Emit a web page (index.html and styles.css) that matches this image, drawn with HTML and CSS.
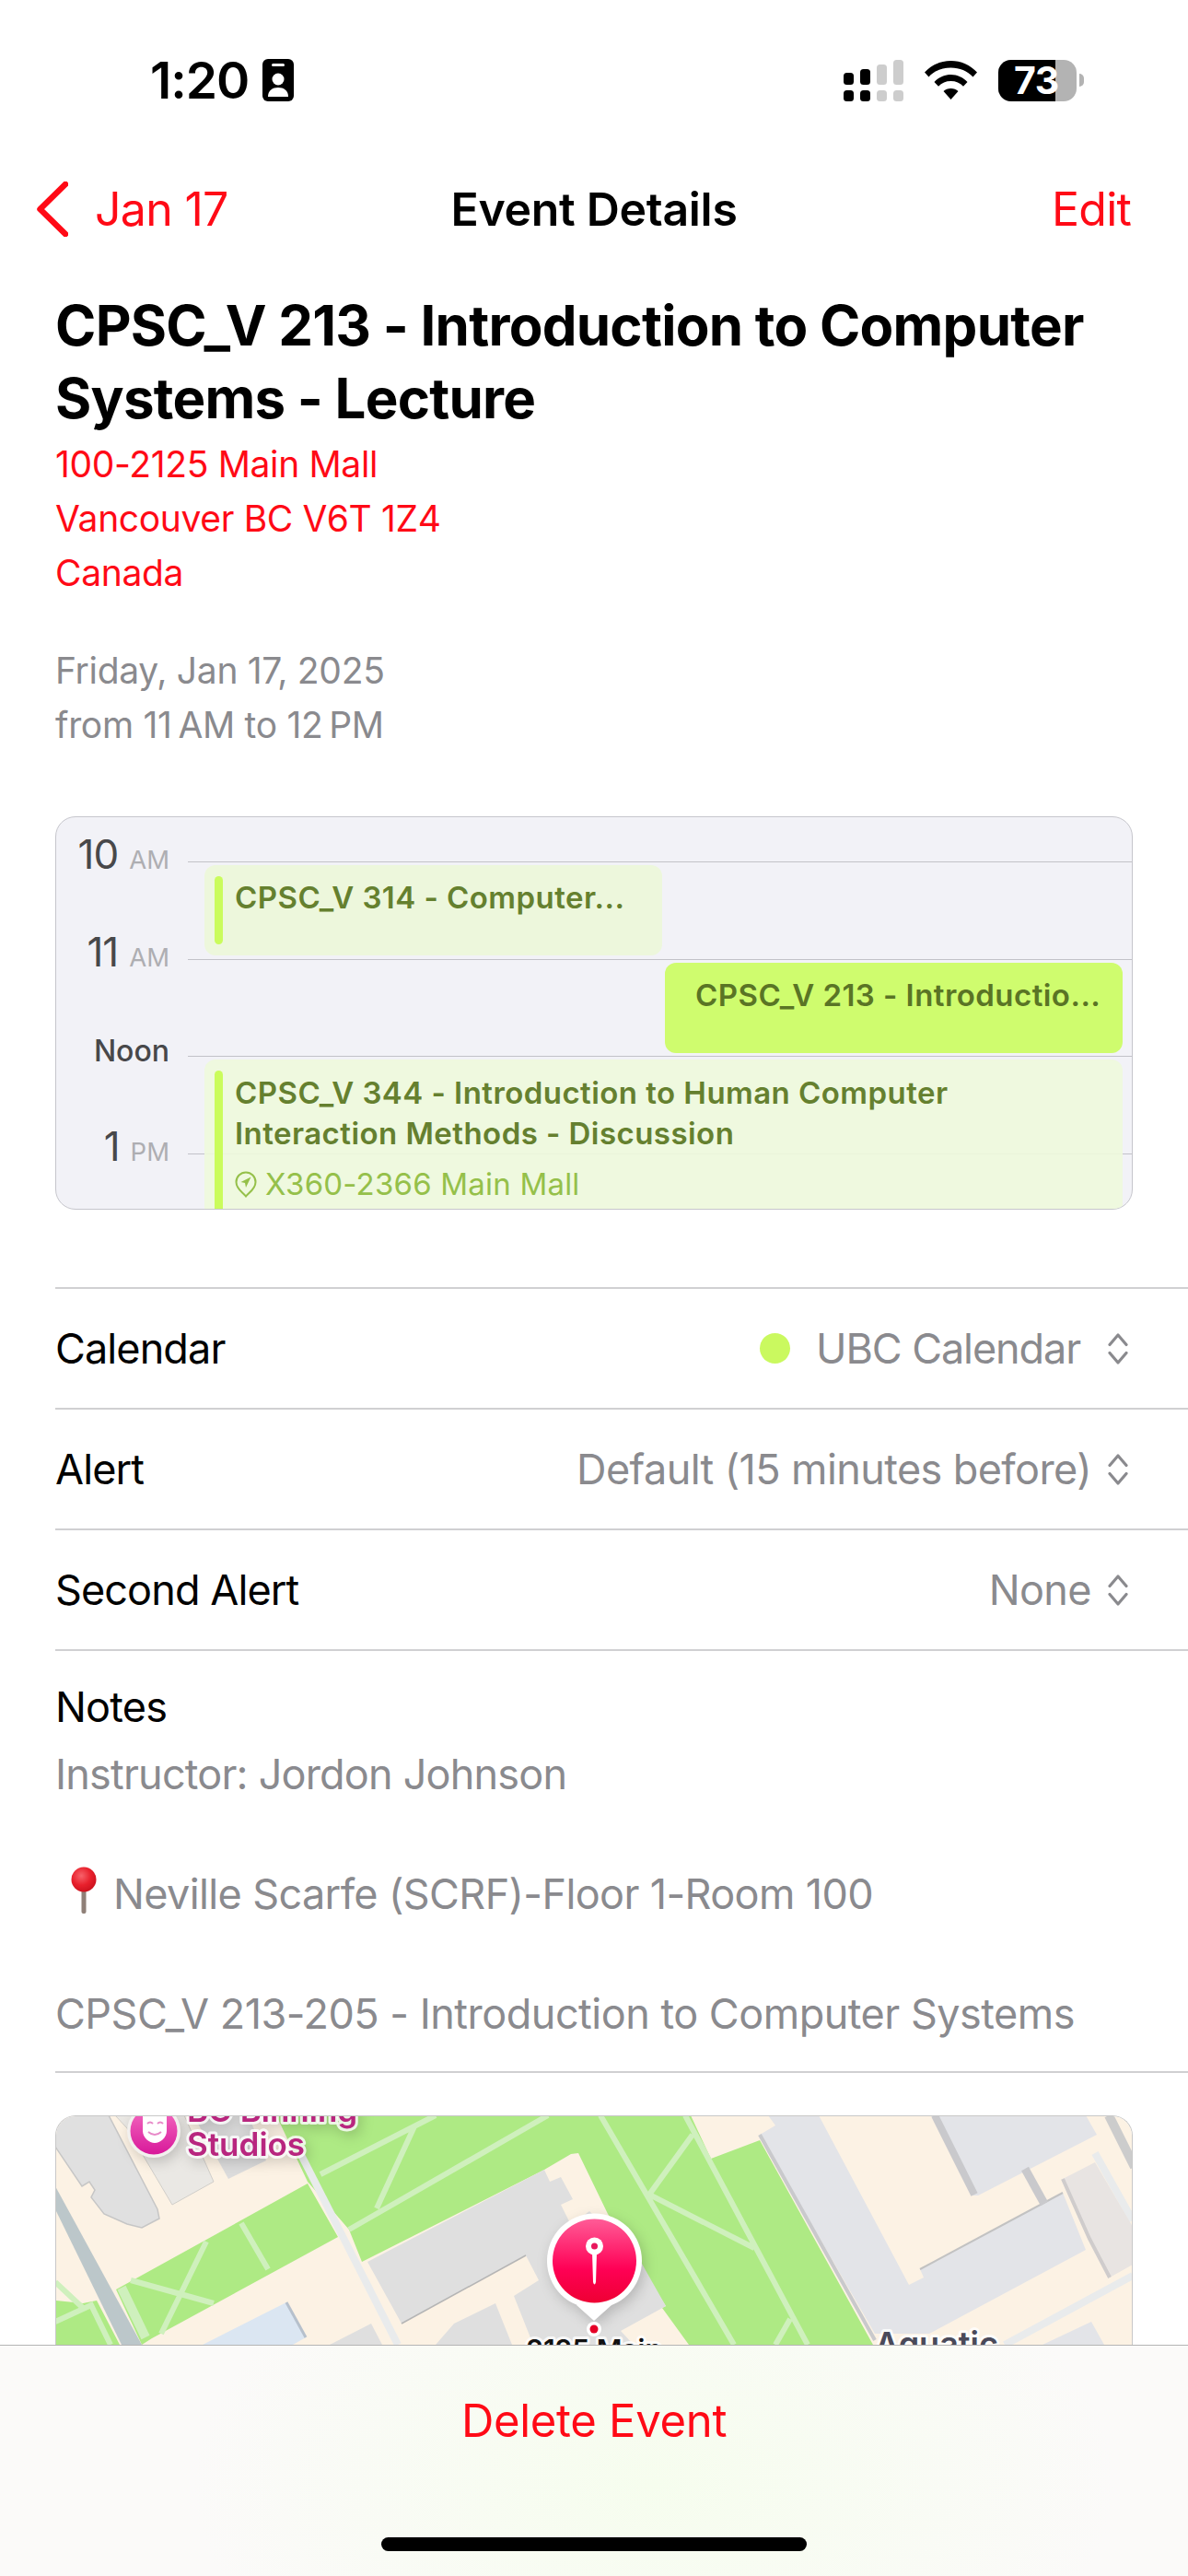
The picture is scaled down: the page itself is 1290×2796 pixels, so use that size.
FILE: index.html
```html
<!DOCTYPE html>
<html lang="en">
<head>
<meta charset="utf-8">
<title>Event Details</title>
<link rel="stylesheet" href="styles.css">
</head>
<body>
<div class="screen">
  <header class="status">
    <div class="status-left">
      <span class="time">1:20</span>
      <svg class="badge" width="34" height="46" viewBox="0 0 34 46"><rect width="34" height="46" rx="6" fill="#000"/><rect x="10" y="5" width="14" height="3" rx="1.5" fill="#fff"/><circle cx="17" cy="22" r="6.5" fill="#fff"/><path d="M6 41c0-7 5-10 11-10s11 3 11 10z" fill="#fff"/></svg>
    </div>
    <div class="status-right">
      <svg class="signal" width="65" height="45" viewBox="0 0 65 45"><g fill="#000"><rect x="0" y="14" width="11" height="13" rx="3.5"/><rect x="18" y="10" width="11" height="17" rx="3.5"/><rect x="0" y="33" width="11" height="12" rx="3.5"/><rect x="18" y="33" width="11" height="12" rx="3.5"/></g><g fill="#cdcdcd"><rect x="36" y="5" width="11" height="22" rx="3.5"/><rect x="54" y="0" width="11" height="27" rx="3.5"/><rect x="36" y="33" width="11" height="12" rx="3.5"/><rect x="54" y="33" width="11" height="12" rx="3.5"/></g></svg>
      <svg class="wifi" width="57" height="42" viewBox="0 0 57 42"><path d="M0 12.500C7.500 4.500 17.500 0 28.500 0S49.500 4.500 57 12.500L52.500 17.500C46.500 11 38 7.500 28.500 7.500S10.500 11 4.500 17.500Z M10.500 23C15 18 21.500 15 28.500 15S42 18 46.500 23L42 27.800C38.500 24 33.800 22 28.500 22S18.500 24 15 27.800Z M20.500 33C22.500 31 25.300 30 28.500 30S34.500 31 36.500 33L28.500 42Z" fill="#000"/></svg>
      <div class="battery"><div class="battery-body"><span class="battery-fill"></span><span class="battery-num">73</span></div><span class="battery-nub"></span></div>
    </div>
  </header>

  <nav class="nav">
    <div class="nav-back">
      <svg width="36" height="60" viewBox="0 0 36 60"><path d="M33 3 5.500 30 33 57" fill="none" stroke="#ff0a16" stroke-width="6.500" stroke-linecap="round" stroke-linejoin="round"/></svg>
      <span>Jan 17</span>
    </div>
    <div class="nav-title">Event Details</div>
    <div class="nav-edit">Edit</div>
  </nav>

  <section class="summary">
    <h1 class="event-title">CPSC_V 213 - Introduction to Computer Systems - Lecture</h1>
    <p class="address">100-2125 Main Mall<br>Vancouver BC V6T 1Z4<br>Canada</p>
    <p class="when">Friday, Jan 17, 2025<br>from 11&#8201;AM to 12&#8201;PM</p>
  </section>

  <section class="day">
    <div class="hour"><div class="hour-label"><b>10</b><i>AM</i></div><div class="hour-line"></div></div>
    <div class="hour"><div class="hour-label"><b>11</b><i>AM</i></div><div class="hour-line"></div></div>
    <div class="hour"><div class="hour-label"><span class="noon">Noon</span></div><div class="hour-line"></div></div>
    <div class="hour"><div class="hour-label"><b>1</b><i>PM</i></div><div class="hour-line"></div></div>
    <div class="event event-a"><span class="event-bar"></span><div class="event-text">CPSC_V 314 - Computer...</div></div>
    <div class="event event-b"><div class="event-text">CPSC_V 213 - Introductio...</div></div>
    <div class="event event-c"><span class="event-bar"></span><div class="event-text">CPSC_V 344 - Introduction to Human Computer<br>Interaction Methods - Discussion<div class="event-loc"><svg width="24" height="29" viewBox="0 0 24 29"><path d="M12 27.500C9 23.500 1.500 20 1.500 12a10.500 10.500 0 0 1 21 0C22.500 20 15 23.500 12 27.500Z" fill="none" stroke="#95c04a" stroke-width="2"/><path d="M17.500 6.500 6.500 12l4.500 1 1 5z" fill="#95c04a"/></svg><span>X360-2366 Main Mall</span></div></div></div>
  </section>

  <section class="rows">
    <div class="row"><span>Calendar</span><div class="row-value"><span class="cal-dot"></span><span class="cal-name">UBC Calendar</span><svg class="updown" width="24" height="34" viewBox="0 0 24 34"><path d="M3 12.500 12 2l9 10.500M3 21.500 12 32l9-10.500" fill="none" stroke="#8a8a8e" stroke-width="3.200" stroke-linecap="round" stroke-linejoin="round"/></svg></div></div>
    <div class="row"><span>Alert</span><div class="row-value"><span>Default (15 minutes before)</span><svg class="updown" width="24" height="34" viewBox="0 0 24 34"><path d="M3 12.500 12 2l9 10.500M3 21.500 12 32l9-10.500" fill="none" stroke="#8a8a8e" stroke-width="3.200" stroke-linecap="round" stroke-linejoin="round"/></svg></div></div>
    <div class="row"><span>Second Alert</span><div class="row-value"><span>None</span><svg class="updown" width="24" height="34" viewBox="0 0 24 34"><path d="M3 12.500 12 2l9 10.500M3 21.500 12 32l9-10.500" fill="none" stroke="#8a8a8e" stroke-width="3.200" stroke-linecap="round" stroke-linejoin="round"/></svg></div></div>
  </section>

  <section class="notes">
    <div class="notes-title">Notes</div>
    <div class="notes-line notes-first">Instructor: Jordon Johnson</div>
    <div class="notes-line notes-gap notes-pin"><svg class="pushpin" width="45" height="52" viewBox="0 0 45 52"><defs><radialGradient id="ball" cx=".4" cy=".35" r=".7"><stop offset="0" stop-color="#f7626a"/><stop offset=".55" stop-color="#e8202c"/><stop offset="1" stop-color="#c9101c"/></radialGradient></defs><rect x="28.500" y="22" width="5" height="29" rx="2" fill="#8f8078"/><circle cx="31" cy="14" r="13.500" fill="url(#ball)"/></svg><span>Neville Scarfe (SCRF)-Floor 1-Room 100</span></div>
    <div class="notes-line notes-gap">CPSC_V 213-205 - Introduction to Computer Systems</div>
  </section>

  <section class="map">
    <svg class="map-svg" width="1170" height="320" viewBox="60 2296 1170 320">
      <defs>
        <linearGradient id="pinfill" x1="0" y1="0" x2="0" y2="1"><stop offset="0" stop-color="#ff5c97"/><stop offset=".6" stop-color="#ff0055"/><stop offset="1" stop-color="#ee0033"/></linearGradient>
        <linearGradient id="maskfill" x1="0" y1="0" x2="0" y2="1"><stop offset="0" stop-color="#f46cc0"/><stop offset="1" stop-color="#d8189a"/></linearGradient>
      </defs>
      <rect x="60" y="2296" width="1170" height="320" fill="#fcf2e4"/>
      <polygon points="300,2296 750,2296 772,2343 825,2323 948,2545 748,2545 719,2505 723,2503 660,2403 628,2337 620,2338 591,2355 393,2455 379,2420 334,2368" fill="#aeea84"/>
      <polygon points="334,2370 126,2485 154,2545 165,2538 367,2428" fill="#aeea84"/>
      <polygon points="60,2497 90,2500 105,2497 130,2545 60,2545" fill="#aeea84"/>
      <polygon points="60,2373 154,2545 132,2545 60,2398" fill="#bcc7ca"/>
      <g fill="none" stroke="#cff0bd" stroke-width="6">
        <path d="M348 2360 473 2296M450 2308 409 2397M379 2420 595 2296M652 2296 797 2545M744 2296 877 2545M752 2317 705 2382 819 2440M858 2517 842 2545"/>
        <path d="M262 2413 291 2463M224 2433 175 2533M142 2475 232 2500M60 2520 99 2502 120 2545M60 2477 90 2505"/>
        <path d="M132 2483 158 2537" stroke-width="10"/>
      </g>
      <path d="M326 2337 432 2545" stroke="#e9ebec" stroke-width="8" fill="none"/>
      <path d="M1230 2470 1091 2545M1189 2337 1230 2410" stroke="#e9ebec" stroke-width="8" fill="none"/>
      <polygon points="60,2296 118,2296 171,2398 173,2408 154,2418 138,2414 113,2403 99,2385 103,2377 97,2368 89,2373 60,2330" fill="#e0e0e0" stroke="#c6c6c6" stroke-width="1.500"/>
      <polygon points="125,2296 200,2296 232,2368 187,2393 138,2310" fill="#eae8e4" stroke="#d0cec9" stroke-width="1"/>
      <polygon points="210,2296 270,2296 289,2345 248,2365" fill="#dcdcdc"/>
      <polygon points="399,2455 591,2355 597,2368 609,2363 622,2387 609,2393 620,2415 640,2400 697,2457 723,2503 674,2530 688,2545 579,2545 558,2492 585,2475 571,2448 436,2522" fill="#dfdfdf"/>
      <path d="M436 2522 571 2448" stroke="#b5b5b5" stroke-width="1.500" fill="none"/>
      <polygon points="473,2545 493,2522 538,2500 556,2545" fill="#dfdfdf"/>
      <polygon points="358,2545 403,2522 415,2545" fill="#dfdfdf"/>
      <polygon points="220,2545 311,2499 332,2537 318,2545" fill="#dbe6f2"/>
      <path d="M311 2499 332 2537" stroke="#b6c0cc" stroke-width="3" fill="none"/>
      <polygon points="825,2317 842,2307 834,2296 889,2296 987,2480 1003,2472 999,2463 1154,2380 1179,2442 1009,2533 950,2533" fill="#e3e4e8"/>
      <path d="M825 2317 950 2540" stroke="#c9c9cc" stroke-width="4" fill="none"/>
      <path d="M999 2463 1154 2380" stroke="#c2c2c2" stroke-width="2" fill="none"/>
      <polygon points="1011,2296 1179,2296 1191,2317 1062,2383 1056,2383" fill="#e3e4e8"/>
      <path d="M1015 2296 1058 2382" stroke="#c9c9cc" stroke-width="8" fill="none"/>
      <path d="M1113 2354 1134 2392" stroke="#c9c9cc" stroke-width="9" fill="none"/>
      <polygon points="1154,2365 1189,2347 1230,2417 1230,2458 1205,2472 1183,2430" fill="#e8e4e2"/>
      <path d="M1154 2365 1183 2430 1205 2472" stroke="#cfcccc" stroke-width="4" fill="none"/>
      <polygon points="1132,2545 1185,2520 1199,2545" fill="#e3e4e8"/>
      <path d="M1204 2296 1232 2352" stroke="#cccccc" stroke-width="10" fill="none"/>
      <g class="map-shadow">
        <circle cx="167" cy="2313" r="29" fill="#f2f0ee"/>
      </g>
      <circle cx="167" cy="2313" r="25.500" fill="url(#maskfill)"/>
      <path d="M155 2296h26v17c0 7-7 13-13 13s-13-6-13-13z" fill="#fff"/>
      <path d="M160 2305q3-3 6 0M171 2305q3-3 6 0M161 2314q7 6 14 0" fill="none" stroke="#e889c8" stroke-width="2"/>
      <g class="map-shadow">
        <text class="map-label map-pink" x="203" y="2303">BC Binning</text>
        <text class="map-label map-pink" x="203" y="2340">Studios</text>
      </g>
      <text class="map-label map-aq" x="950" y="2557">Aquatic</text>
      <text class="map-label map-black" x="645" y="2561" text-anchor="middle">2125 Main</text>
      <g class="map-shadow">
        <path d="M645 2519 626 2502h38z" fill="#fff"/>
        <circle cx="645.500" cy="2454" r="51.500" fill="#fff"/>
      </g>
      <circle cx="645.500" cy="2454" r="45.500" fill="url(#pinfill)"/>
      <path d="M643 2445h5l-1 32q-1.500 5-3 0z" fill="#fff"/>
      <circle cx="645.500" cy="2438" r="9.500" fill="#fff"/>
      <circle cx="645.500" cy="2438" r="3.500" fill="#e8175d"/>
      <circle cx="645" cy="2528" r="8" fill="#fff"/>
      <circle cx="645" cy="2528" r="4.500" fill="#e50027"/>
    </svg>
  </section>

  <footer class="toolbar">
    <div class="delete">Delete Event</div>
    <div class="home"></div>
  </footer>
</div>
</body>
</html>
```

FILE: styles.css
```css
* { box-sizing: border-box; }
html, body { margin: 0; padding: 0; background: #fff; }
body { font-family: Inter, "Liberation Sans", sans-serif; color: #000; }
.screen { position: relative; width: 1290px; height: 2796px; overflow: hidden; background: #fff; }

.status { height: 174px; display: flex; justify-content: space-between; align-items: center; padding: 0 113px 0 163px; }
.status-left { display: flex; align-items: center; gap: 15px; }
.time { font-size: 55px; font-weight: 600; letter-spacing: -1px; line-height: 60px; }
.badge { display: block; }
.status-right { display: flex; align-items: center; }
.signal { display: block; margin-right: 23px; }
.wifi { display: block; margin-right: 23px; }
.battery { display: flex; align-items: center; gap: 3px; }
.battery-body { position: relative; width: 85px; height: 45px; border-radius: 14px; background: #b3b3b3; overflow: hidden; }
.battery-fill { position: absolute; left: 0; top: 0; bottom: 0; width: 62px; background: #000; }
.battery-num { position: absolute; left: 17px; top: 0; line-height: 45px; font-size: 41px; font-weight: 700; color: #fff; letter-spacing: -0.5px; }
.battery-nub { width: 5px; height: 14px; border-radius: 0 7px 7px 0; background: #b3b3b3; }

.nav { position: relative; height: 106px; display: flex; align-items: center; justify-content: space-between; padding: 0 62px 0 38px; font-size: 50px; line-height: 60px; color: #ff0a16; }
.nav-back { display: flex; align-items: center; gap: 29px; letter-spacing: -0.7px; }
.nav-back svg { display: block; }
.nav-title { position: absolute; left: 0; right: 0; text-align: center; color: #000; font-weight: 600; letter-spacing: -0.3px; }
.nav-edit { letter-spacing: -0.8px; }

.summary { padding: 34px 60px 0; }
.event-title { margin: 0; font-size: 60px; line-height: 79px; font-weight: 700; letter-spacing: -0.75px; }
.address { margin: 2px 0 0; font-size: 39px; line-height: 59px; letter-spacing: -0.35px; color: #ff0a16; }
.when { margin: 47px 0 0; font-size: 39px; line-height: 59px; letter-spacing: -0.3px; color: #8a8a8e; }

.day { position: relative; margin: 70px 60px 0; height: 427px; padding-top: 48px; background: #f2f2f7; border: 1.5px solid #c6c6cc; border-radius: 22px; overflow: hidden; }
.hour { display: flex; height: 105.700px; }
.hour-label { width: 143px; height: 60px; margin-top: -38px; padding-right: 20px; display: flex; justify-content: flex-end; align-items: baseline; gap: 12px; line-height: 60px; }
.hour-label b { font-size: 44px; font-weight: 400; color: #48484a; letter-spacing: -1px; }
.hour-label i { font-style: normal; font-size: 27.500px; color: #aeaeb2; }
.hour-label .noon { margin-top: 3px; font-size: 32px; font-weight: 500; color: #48484a; }
.hour-line { flex: 1; border-top: 1.500px solid #c2c2c8; }
.event { position: absolute; display: flex; border-radius: 12px; font-size: 33px; line-height: 44px; font-weight: 600; letter-spacing: 0.45px; color: #65802f; white-space: nowrap; }
.event-a { left: 161px; width: 497px; top: 52px; height: 98px; background: #edf7dc; padding: 13px 0 0 33px; }
.event-b { left: 661px; width: 497px; top: 158px; height: 98px; background: #cffc6e; padding: 13px 0 0 33px; color: #5a7425; }
.event-c { left: 161px; width: 997px; top: 263px; height: 180px; background: rgba(238, 250, 220, .9); padding: 14px 0 0 33px; }
.event-bar { position: absolute; left: 11px; top: 12px; bottom: 12px; width: 9px; border-radius: 5px; background: #cafc5c; }
.event-c .event-bar { bottom: 0; }
.event-loc { display: flex; align-items: center; gap: 9px; margin-top: 11px; font-weight: 400; letter-spacing: 0.2px; color: #95c04a; }
.event-loc svg { display: block; }

.rows { margin: 84px 0 0 60px; border-top: 2px solid #d0d0d2; }
.row { height: 131px; display: flex; align-items: center; justify-content: space-between; padding-right: 64px; border-bottom: 2px solid #d0d0d2; font-size: 45px; letter-spacing: -0.9px; }
.row-value { display: flex; align-items: center; gap: 17px; color: #8a8a8e; letter-spacing: -0.6px; }
.cal-dot { width: 33px; height: 33px; border-radius: 50%; background: #caf95f; margin-right: 11px; }
.cal-name { margin-right: 12px; letter-spacing: -1.1px; }
.updown { display: block; }

.notes { margin-left: 60px; height: 458px; padding-top: 31px; border-bottom: 2px solid #d0d0d2; font-size: 45px; letter-spacing: -0.5px; }
.notes-title { line-height: 59px; letter-spacing: -0.8px; }
.notes-line { margin-top: 11px; line-height: 65px; color: #8a8a8e; display: flex; align-items: center; }
.notes-first { letter-spacing: -0.8px; }
.notes-pin { letter-spacing: -0.62px; }
.notes-gap { margin-top: 65px; }
.pushpin { display: block; margin: -8px 18px 0 0; }

.map { margin: 46px 60px 0; height: 320px; border: 1.500px solid #c8c8c8; border-bottom: 0; border-radius: 22px 22px 0 0; overflow: hidden; }
.map-svg { display: block; margin: -1.500px; }
.map-shadow { filter: drop-shadow(3px 5px 7px rgba(0, 0, 0, .18)); }
.map-label { font-family: Inter, sans-serif; font-weight: 600; paint-order: stroke; stroke: rgba(255,255,255,.8); stroke-width: 6px; stroke-linejoin: round; }
.map-pink { font-size: 35px; fill: #b8267f; }
.map-aq { font-size: 36px; fill: #4a4a5a; }
.map-black { font-size: 30px; fill: #111; }

.toolbar { position: absolute; left: 0; right: 0; bottom: 0; height: 251px; background: radial-gradient(ellipse 500px 300px at 55% 60%, #f6fdee 0%, #fbfaf9 100%); border-top: 1.500px solid #b5b5b5; }
.delete { text-align: center; margin-top: 52px; font-size: 49px; line-height: 60px; color: #ff0a16; letter-spacing: -0.3px; }
.home { position: absolute; left: 414px; bottom: 27px; width: 462px; height: 15px; border-radius: 8px; background: #000; }
```
